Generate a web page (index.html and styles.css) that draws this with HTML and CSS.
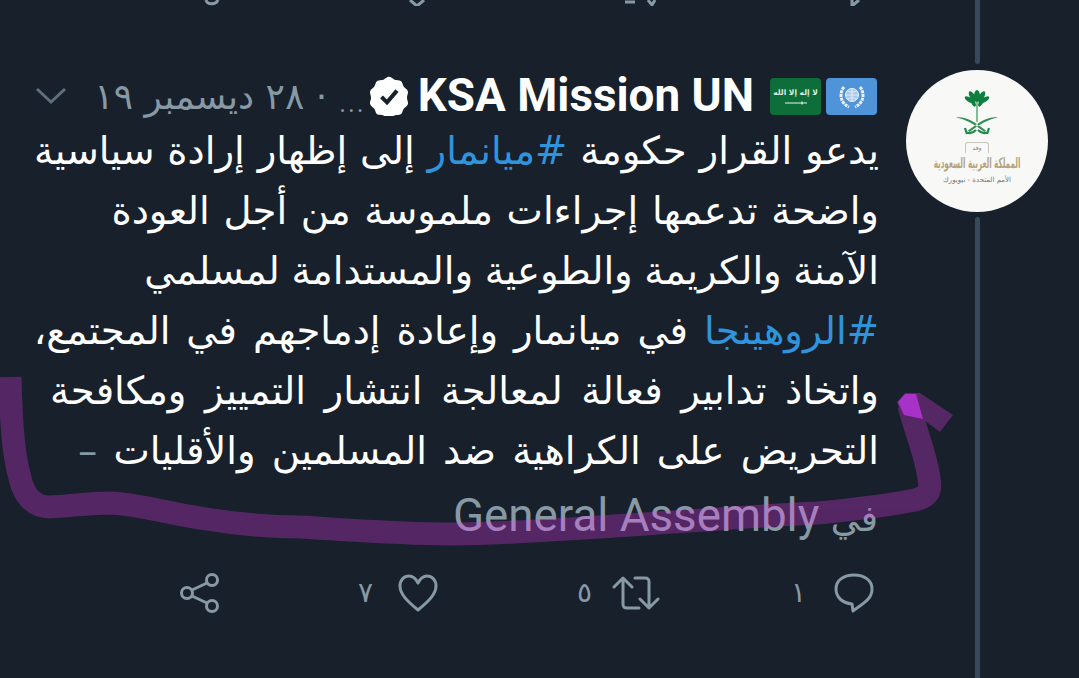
FILE: index.html
```html
<!DOCTYPE html>
<html lang="ar" dir="rtl">
<head>
<meta charset="utf-8">
<title>KSA Mission UN</title>
<link rel="stylesheet" href="styles.css">
</head>
<body>
<svg class="prev-actions" viewBox="0 0 1079 6" aria-hidden="true">
  <path d="M206 0c1 5 10 5 12 0M410 0l7 6 7-6M625 2h10M648 0l4 5 3-5M852 0v6l7-6" fill="none" stroke="#8899a6" stroke-width="3"/>
</svg>
<main class="tweet">
  <aside class="side">
    <div class="thread thread-top"></div>
    <div class="avatar">
      <svg class="emblem" viewBox="0 0 42 45" aria-hidden="true">
        <path d="M21 10v22" stroke="#5aa874" stroke-width="1.5" fill="none"/>
        <g fill="#0f7f3f">
          <ellipse cx="21" cy="6" rx="3" ry="6"/>
          <ellipse cx="16.500" cy="6.500" rx="2.600" ry="6" transform="rotate(-30 16.500 6.500)"/>
          <ellipse cx="25.500" cy="6.500" rx="2.600" ry="6" transform="rotate(30 25.500 6.500)"/>
          <ellipse cx="14" cy="10" rx="2.400" ry="6" transform="rotate(-60 14 10)"/>
          <ellipse cx="28" cy="10" rx="2.400" ry="6" transform="rotate(60 28 10)"/>
          <ellipse cx="17" cy="12" rx="2" ry="5" transform="rotate(-25 17 12)"/>
          <ellipse cx="25" cy="12" rx="2" ry="5" transform="rotate(25 25 12)"/>
        </g>
        <path fill="#2f8f55" d="M0 27.500c9-1.500 18 4 30 13l-1.500 1.500C18 34 9 29 0 27.500zM42 27.500c-9-1.500-18 4-30 13l1.500 1.500C24 34 33 29 42 27.500z"/>
        <path d="M10 42c3 2 6 2 10-2M32 42c-3 2-6 2-10-2M9 38l2 6M33 38l-2 6" fill="none" stroke="#1f8a4c" stroke-width="2.200"/>
      </svg>
      <span class="badge-word">وفد</span>
      <span class="logo-title">المملكة العربية السعودية</span>
      <span class="logo-sub">الأمم المتحدة - نيويورك</span>
    </div>
    <div class="thread thread-bottom"></div>
  </aside>
  <section class="content">
    <header class="head">
      <span class="flag flag-un">
        <svg viewBox="0 0 28 28" class="un-mark" aria-hidden="true">
          <circle cx="14" cy="13" r="6.500" fill="#a9c9ec" stroke="#f2f6fb" stroke-width="1"/>
          <path d="M7.500 13h13M14 6.500v13M9.500 9c3 1.500 6 1.500 9 0M9.500 17c3-1.500 6-1.500 9 0" stroke="#f2f6fb" stroke-width=".7" fill="none"/>
          <path d="M6 5C1 11 2 21 11 25M22 5c5 6 4 16-5 20" fill="none" stroke="#e8f0f9" stroke-width="3" stroke-dasharray="3 .8"/>
        </svg>
      </span>
      <span class="flag flag-sa">
        <span class="flag-text">لا إله إلا الله</span>
        <svg viewBox="0 0 22 4" class="sword" aria-hidden="true"><path d="M0 2h18M17 .500v3M18 2h4" stroke="#e8f3ec" stroke-width="1.200" fill="none"/></svg>
      </span>
      <bdi class="name" dir="ltr">KSA Mission UN</bdi>
      <svg class="verified" viewBox="0 0 24 24" aria-hidden="true">
        <path fill="#fff" d="M12 .5c1.300 0 2.300 1.300 3.300 1.700 1.200.4 2.800 0 3.800.8 1 .7 1 2.300 1.700 3.300.7 1 2.200 1.600 2.500 2.800.4 1.200-.5 2.500-.5 3.900s.9 2.700.5 3.900c-.3 1.200-1.800 1.800-2.500 2.800-.7 1-.7 2.600-1.700 3.300-1 .7-2.600.3-3.800.7-1 .4-2 1.600-3.300 1.600s-2.300-1.200-3.300-1.600c-1.200-.4-2.800 0-3.800-.7-1-.7-1-2.300-1.700-3.300-.7-1-2.200-1.600-2.500-2.800-.4-1.200.5-2.500.5-3.900s-.9-2.700-.5-3.900c.3-1.200 1.800-1.800 2.500-2.800.7-1 .7-2.600 1.700-3.300 1-.8 2.600-.4 3.800-.8 1-.4 2-1.700 3.300-1.700z"/>
        <path d="M7.500 12.500l3.300 3.300 6-7" fill="none" stroke="#17202b" stroke-width="2.400"/>
      </svg>
      <span class="ellipsis" dir="ltr">...</span>
      <span class="meta">· ٢٨ ديسمبر ١٩</span>
      <svg class="chev" viewBox="0 0 32 18" aria-hidden="true"><path d="M2 2l14 13L30 2" fill="none" stroke="#5f6f7e" stroke-width="3"/></svg>
    </header>
    <p class="body">
      <span class="line l1">يدعو القرار حكومة <span class="tag">#ميانمار</span> إلى إظهار إرادة سياسية</span>
      <span class="line l2">واضحة تدعمها إجراءات ملموسة من أجل العودة</span>
      <span class="line l3">الآمنة والكريمة والطوعية والمستدامة لمسلمي</span>
      <span class="line l4"><span class="tag">#الروهينجا</span> في ميانمار وإعادة إدماجهم في المجتمع،</span>
      <span class="line l5">واتخاذ تدابير فعالة لمعالجة انتشار التمييز ومكافحة</span>
      <span class="line l6">التحريض على الكراهية ضد المسلمين والأقليات <span class="dash">–</span></span>
    </p>
    <p class="place">في <bdi dir="ltr">General Assembly</bdi></p>
    <footer class="actions">
      <span class="action"><svg class="i-comment" viewBox="0 0 40 40" aria-hidden="true"><path d="M19 38l-1-7C9 30 2 25 2 16 2 7 10 2 20 2s18 5 18 14c0 10-8 14-19 22z" class="ico"/></svg><span class="num n1">١</span></span>
      <span class="action"><svg class="i-rt" viewBox="0 0 48 34" aria-hidden="true"><path class="ico" d="M2 11l9-9 9 9M11 3v25c0 3 1 4 4 4h12M46 23l-9 9-9-9M37 31V6c0-3-1-4-4-4H23"/></svg><span class="num n2">٥</span></span>
      <span class="action"><svg class="i-heart" viewBox="0 0 40 38" aria-hidden="true"><path class="ico" d="M20 36C9 27 2 20 2 12 2 6 6 2 11 2c4 0 7 3 9 7 2-4 5-7 9-7 5 0 9 4 9 10 0 8-7 15-18 24z"/></svg><span class="num n3">٧</span></span>
      <span class="action"><svg class="i-share" viewBox="0 0 40 40" aria-hidden="true"><g class="ico"><circle cx="32" cy="7" r="5.500"/><circle cx="32" cy="33" r="5.500"/><circle cx="7" cy="20" r="5.500"/><path d="M12 17l15-7M12 23l15 7"/></g></svg></span>
    </footer>
  </section>
</main>
<svg class="scribble" viewBox="0 0 1079 678" aria-hidden="true">
  <g opacity=".27">
    <path d="M10 377C11 410 12 450 20 478C24 497 35 507 50 507C70 506 90 503 110 503C140 504 170 514 200 518C235 524 265 527 300 527C350 530 400 534 450 534C500 534 550 530 600 527C680 522 750 516 817 513C860 509 890 505 915 500C930 496 931 490 929 478C926 455 915 430 909 405" fill="none" stroke="#fd3aff" stroke-width="23"/>
    <path d="M897 402L905 393H920L953 415L940 432L924 420L905 425z" fill="#fd3aff"/>
  </g>
  <path d="M898 402L905 394H916L923 419L904 415z" fill="#a832c8"/>
</svg>
</body>
</html>
```
FILE: styles.css
```css
html, body { margin: 0; padding: 0; }
body {
  width: 1079px; height: 678px; overflow: hidden;
  background: #17202b; color: #fff; position: relative;
  font-family: "DejaVu Sans", "Noto Sans", sans-serif;
}
.prev-actions { position: absolute; top: 0; left: 0; width: 1079px; height: 6px; }
.tweet { display: flex; height: 678px; }
.side { width: 204px; margin-left: -3px; flex: none; display: flex; flex-direction: column; align-items: center; }
.thread { width: 5px; background: #38495c; }
.thread-top { height: 64px; border-radius: 0 0 3px 3px; }
.thread-bottom { flex: 1; margin-top: 5px; border-radius: 3px 3px 0 0; }
.avatar {
  width: 142px; height: 142px; border-radius: 50%; background: #f8f8f7; margin-top: 6px;
  display: flex; flex-direction: column; align-items: center; overflow: hidden; flex: none;
}
.emblem { width: 42px; height: 45px; margin-top: 20px; flex: none; }
.badge-word { font-size: 6px; color: #8a7d5a; border: 1px solid #c9c6bd; border-bottom: 0; border-radius: 3px 3px 0 0; padding: 0 7px; margin-top: 7px; line-height: 10px; }
.logo-title { font-size: 7.200px; color: #b3a47c; line-height: 10px; white-space: nowrap; font-weight: bold; transform: scaleY(2); margin-top: 6px; }
.logo-sub { font-size: 7px; color: #777; line-height: 10px; white-space: nowrap; margin-top: 6px; }
.content { flex: 1; padding: 0; min-width: 0; }
.head { display: flex; align-items: center; height: 44px; margin-top: 74px; }
.flag { width: 51px; height: 37px; border-radius: 4px; flex: none; display: flex; flex-direction: column; align-items: center; justify-content: center; }
.flag-un { background: #4f93d9; margin-right: 1px; margin-left: 5px; }
.flag-sa { background: #0e6e3a; margin-left: 16px; }
.un-mark { width: 28px; height: 28px; }
.flag-text { font-size: 7.500px; font-weight: bold; line-height: 11px; color: #dcefe3; white-space: nowrap; }
.sword { width: 22px; height: 4px; margin-top: 3px; }
.name { font-family: "Roboto", "Liberation Sans", sans-serif; font-weight: 700; font-size: 45.800px; line-height: 44px; white-space: nowrap; }
.verified { width: 40px; height: 40px; margin-right: 9px; flex: none; }
.ellipsis { color: #8899a6; font-size: 26px; font-family: "Roboto", sans-serif; margin-top: 14px; letter-spacing: 2px; margin-right: 3px; }
.meta { color: #8899a6; font-size: 36px; margin-right: 12px; white-space: nowrap; }
.chev { width: 32px; height: 18px; margin-right: 27px; flex: none; }
.body { margin: 3px -1px 0 0; font-size: 38.600px; line-height: 60px; white-space: nowrap; }
.line { display: block; }
.l1 { word-spacing: .6px; }
.l2 { word-spacing: 1.300px; }
.l3 { word-spacing: -.7px; }
.l4 { word-spacing: 3.700px; }
.l5 { word-spacing: 6.300px; }
.l6 { word-spacing: 3.800px; }
.tag { color: #3094dc; }
.dash { color: #8899a6; }
.place { margin: 6px 0 0; font-size: 36px; line-height: 58px; color: #8899a6; white-space: nowrap; }
.place bdi { font-family: "Roboto", sans-serif; font-size: 45.700px; }
.actions { display: grid; grid-template-columns: 214px 222px 218px 40px; justify-items: start; align-items: center; margin-top: 25px; padding-right: 4px; color: #8899a6; font-size: 28px; }
.action { display: flex; align-items: center; height: 40px; }
.num { line-height: 40px; }
.n1 { margin-right: 28px; }
.n2 { margin-right: 20px; }
.n3 { margin-right: 25px; }
.i-comment, .i-heart, .i-share { width: 40px; height: 40px; flex: none; }
.i-rt { width: 48px; height: 34px; flex: none; }
.ico { fill: none; stroke: #8899a6; stroke-width: 3; stroke-linecap: round; stroke-linejoin: round; }
.scribble { position: absolute; inset: 0; width: 1079px; height: 678px; pointer-events: none; }
```
